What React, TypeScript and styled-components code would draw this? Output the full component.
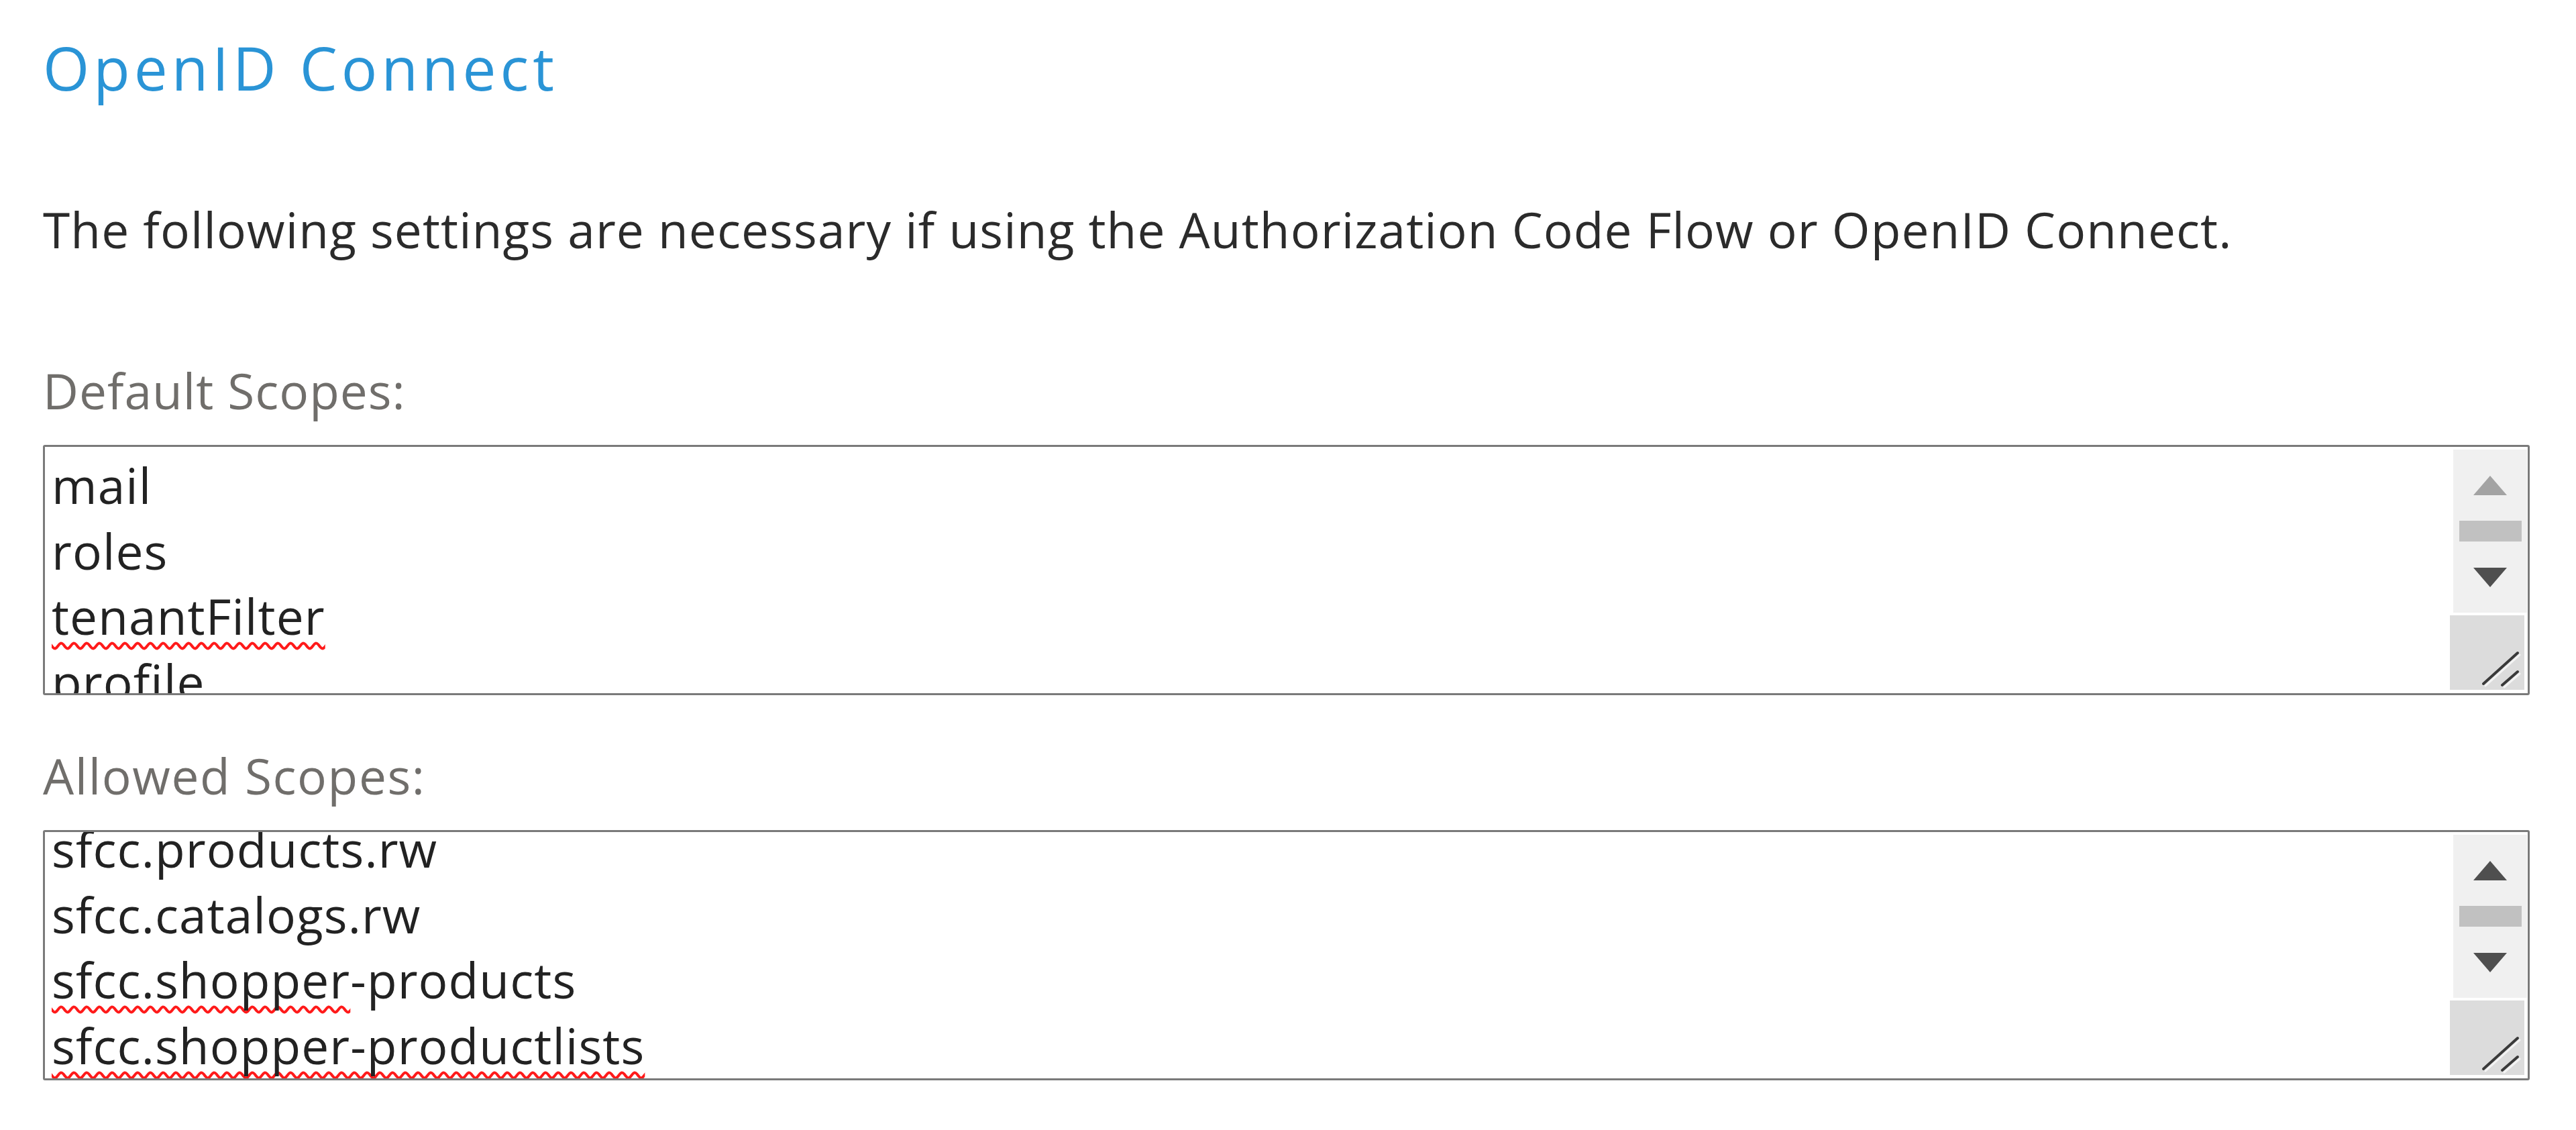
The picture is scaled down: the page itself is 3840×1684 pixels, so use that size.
import React from 'react';
import styled, { createGlobalStyle } from 'styled-components';

const GlobalStyle = createGlobalStyle`
  html, body {
    margin: 0;
    padding: 0;
    background: #ffffff;
  }
  body {
    font-family: 'Open Sans', 'Liberation Sans', sans-serif;
    color: #2b2b2b;
  }
`;

const Page = styled.div`
  padding: 51px 69px 0 64px;
`;

const Title = styled.h2`
  margin: 0;
  font-size: 89px;
  line-height: 100px;
  font-weight: 400;
  letter-spacing: 6px;
  color: #2a94d6;
`;

const Intro = styled.p`
  margin: 141px 0 0;
  font-size: 73px;
  line-height: 100px;
  letter-spacing: 1.1px;
  color: #2b2b2b;
`;

const Fields = styled.div`
  margin-top: 140px;
  display: flex;
  flex-direction: column;
  gap: 70px;
`;

const Field = styled.div`
  display: flex;
  flex-direction: column;
`;

const Label = styled.label<{ $spacing: number }>`
  display: block;
  font-size: 73px;
  line-height: 100px;
  letter-spacing: ${(p) => p.$spacing}px;
  color: #706e6b;
  margin-bottom: 31px;
`;

const ScopeBox = styled.div`
  height: 373px;
  box-sizing: border-box;
  display: flex;
  border: 3px solid #7a7a7a;
  border-radius: 3px;
  background: #ffffff;
`;

const Lines = styled.div`
  flex: 1;
  overflow: hidden;
  padding: 8px 10px 0;
`;

const LineList = styled.div<{ $scroll: number }>`
  margin-top: ${(p) => -p.$scroll}px;
`;

const Line = styled.div`
  font-size: 73px;
  line-height: 97.5px;
  letter-spacing: 1.1px;
  color: #222222;
  white-space: nowrap;
`;

const Misspelled = styled.span`
  text-decoration: underline wavy #ff1a1a;
  text-decoration-thickness: 4px;
  text-underline-offset: 11px;
  text-decoration-skip-ink: none;
`;

const ScrollColumn = styled.div`
  width: 116px;
  display: flex;
  flex-direction: column;
  padding: 4px 0 5px;
  box-sizing: border-box;
`;

const Track = styled.div`
  margin: 0 1px 0 5px;
  height: 243px;
  background: #f0f0f0;
  display: flex;
  flex-direction: column;
  align-items: center;
`;

const ArrowButton = styled.div`
  height: 106px;
  width: 100%;
  display: flex;
  align-items: center;
  justify-content: center;
`;

const Thumb = styled.div`
  width: 93px;
  height: 31px;
  background: #c1c1c1;
`;

const Resizer = styled.div`
  margin: 4px 5px 0 0;
  width: 111px;
  height: 111px;
  background: #dcdcdc;
`;

const Arrow = ({ up, active }: { up: boolean; active: boolean }) => (
  <svg width="50" height="29" viewBox="0 0 50 29">
    <polygon
      points={up ? '25,0 50,29 0,29' : '0,0 50,0 25,29'}
      fill={active ? '#4f4f4f' : '#a3a3a3'}
    />
  </svg>
);

const Grip = () => (
  <svg width="111" height="111" viewBox="0 0 111 111">
    <g strokeLinecap="round">
      <line x1="53" y1="105" x2="104" y2="59" stroke="#f4f4f4" strokeWidth="3" />
      <line x1="81" y1="107" x2="104" y2="87" stroke="#f4f4f4" strokeWidth="3" />
      <line x1="50" y1="102" x2="101" y2="56" stroke="#3a3a3a" strokeWidth="4" />
      <line x1="78" y1="104" x2="101" y2="84" stroke="#3a3a3a" strokeWidth="4" />
    </g>
  </svg>
);

type Scope = { text: string; flagged?: string };

const ScopeField = ({
  label,
  labelSpacing,
  scopes,
  scroll,
  atTop,
}: {
  label: string;
  labelSpacing: number;
  scopes: Scope[];
  scroll: number;
  atTop: boolean;
}) => (
  <Field>
    <Label $spacing={labelSpacing}>{label}</Label>
    <ScopeBox>
      <Lines>
        <LineList $scroll={scroll}>
          {scopes.map((s) => {
            if (!s.flagged) return <Line key={s.text}>{s.text}</Line>;
            const rest = s.text.slice(s.flagged.length);
            return (
              <Line key={s.text}>
                <Misspelled>{s.flagged}</Misspelled>
                {rest}
              </Line>
            );
          })}
        </LineList>
      </Lines>
      <ScrollColumn>
        <Track>
          <ArrowButton>
            <Arrow up active={!atTop} />
          </ArrowButton>
          <Thumb />
          <ArrowButton>
            <Arrow up={false} active />
          </ArrowButton>
        </Track>
        <Resizer>
          <Grip />
        </Resizer>
      </ScrollColumn>
    </ScopeBox>
  </Field>
);

const defaultScopes: Scope[] = [
  { text: 'mail' },
  { text: 'roles' },
  { text: 'tenantFilter', flagged: 'tenantFilter' },
  { text: 'profile' },
];

const allowedScopes: Scope[] = [
  { text: 'sfcc.products.rw' },
  { text: 'sfcc.catalogs.rw' },
  { text: 'sfcc.shopper-products', flagged: 'sfcc.shopper' },
  { text: 'sfcc.shopper-productlists', flagged: 'sfcc.shopper-productlists' },
];

const App: React.FC = () => {
  return (
    <Page>
      <GlobalStyle />
      <Title>OpenID Connect</Title>
      <Intro>
        The following settings are necessary if using the Authorization Code Flow or OpenID Connect.
      </Intro>
      <Fields>
        <ScopeField
          label="Default Scopes:"
          labelSpacing={1}
          scopes={defaultScopes}
          scroll={0}
          atTop
        />
        <ScopeField
          label="Allowed Scopes:"
          labelSpacing={1.6}
          scopes={allowedScopes}
          scroll={32}
          atTop={false}
        />
      </Fields>
    </Page>
  );
};

export default App;
